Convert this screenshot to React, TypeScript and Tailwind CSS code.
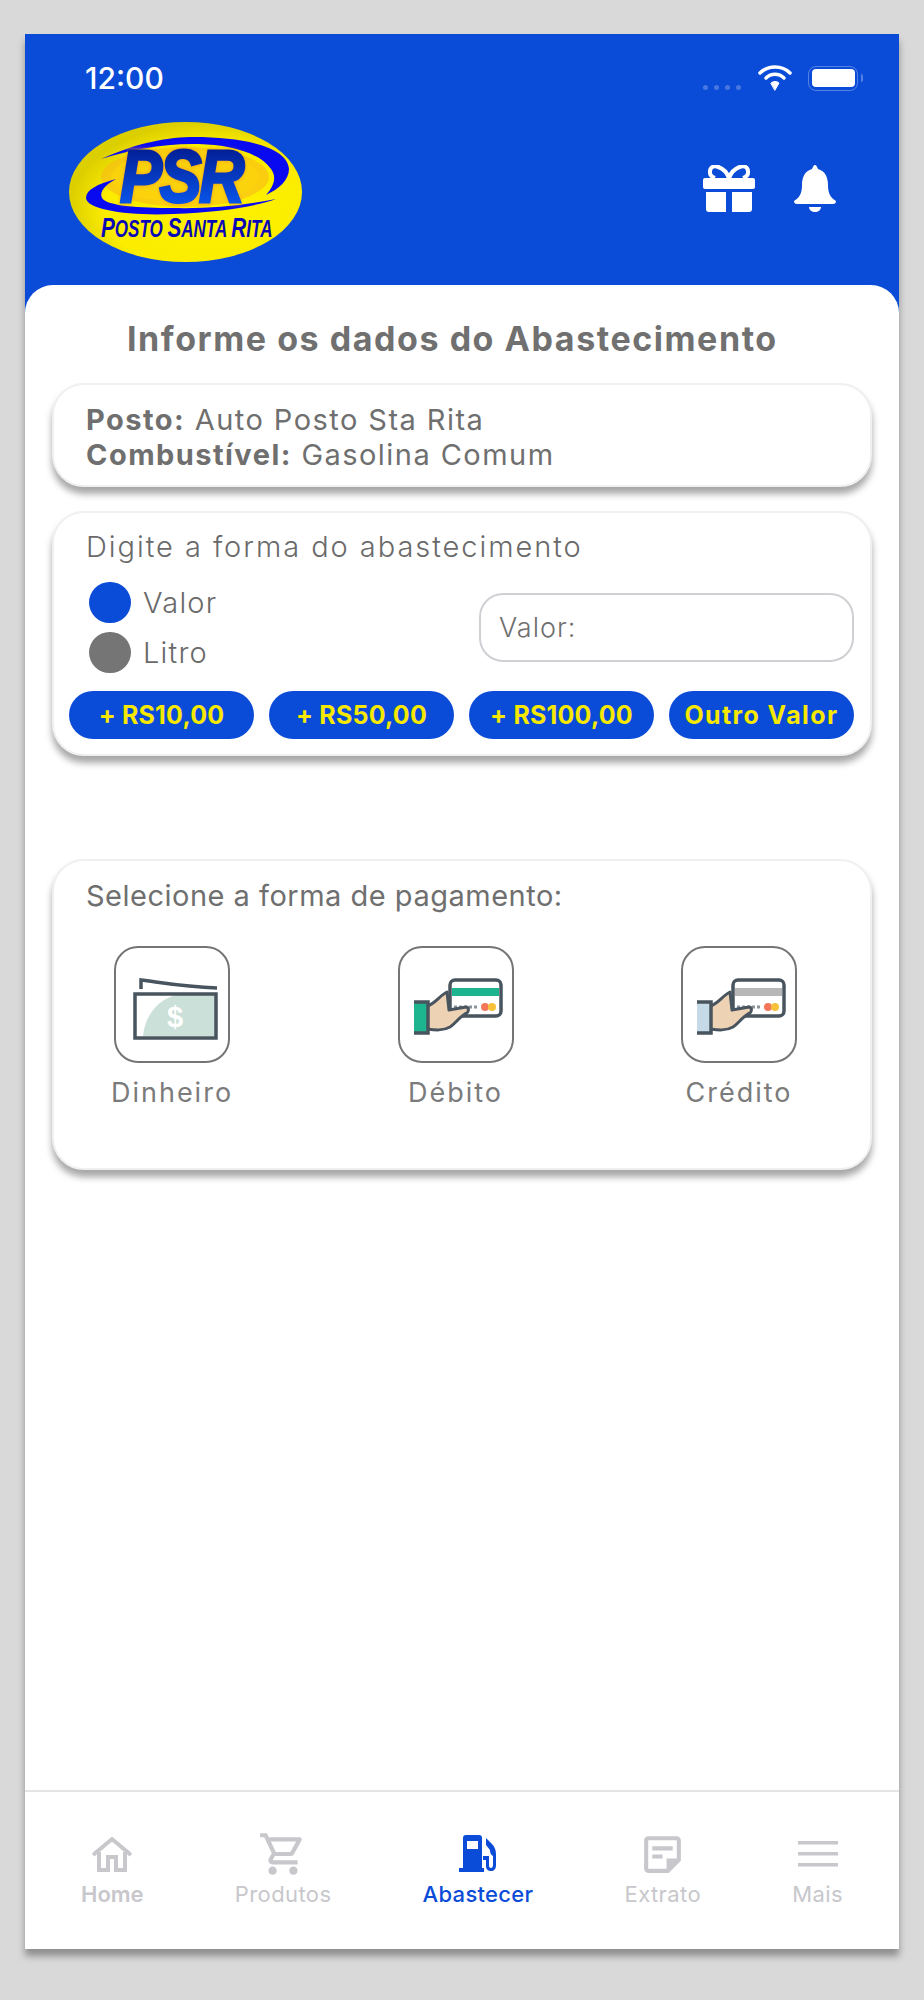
import { MdOutlineShoppingCart, MdOutlineStickyNote2 } from 'react-icons/md';

const QUICK_VALUES = [
    { label: '+ RS10,00', cls: 'tracking-[0.2px]' },
    { label: '+ RS50,00', cls: 'tracking-[0.2px]' },
    { label: '+ RS100,00', cls: 'tracking-[0.2px]' },
    { label: 'Outro Valor', cls: 'tracking-[1.4px]' },
];

function Logo() {
    return (
        <svg width="233" height="140" viewBox="0 0 233 140">
            <defs>
                <radialGradient id="logoBg" cx="62%" cy="62%" r="62%">
                    <stop offset="0%" stopColor="#fff200" />
                    <stop offset="75%" stopColor="#fbec00" />
                    <stop offset="100%" stopColor="#dccf00" />
                </radialGradient>
                <linearGradient id="psrFill" x1="0" y1="0" x2="0" y2="1">
                    <stop offset="0%" stopColor="#00107e" />
                    <stop offset="100%" stopColor="#0a62ff" />
                </linearGradient>
            </defs>
            <ellipse cx="116.5" cy="70" rx="116.5" ry="70" fill="url(#logoBg)" />
            <ellipse cx="116" cy="55" rx="84" ry="30" fill="#f8b51c" opacity="0.55" />
            <ellipse cx="116" cy="55" rx="74" ry="25" fill="#fbd40c" opacity="0.7" />
            <path d="M32 37C70 20 100 15 125 15C175 15 219 25 220 47C220 58 210 67 197 73C205 64 208 55 202 47C190 30 160 23 130 22C95 21 60 28 32 37Z" fill="#0a0af0" />
            <path d="M47 57C28 62 17 68 17 76C18 88 60 94 104 92C150 90 185 85 207 77C175 83 140 87 104 86C70 86 38 84 33 76C30 70 36 63 47 57Z" fill="#0a0af0" />
            <text transform="translate(51 80) scale(0.84 1)" className="drop-shadow-[0_0_2px_#f59a1e]" fontFamily="'Liberation Sans', sans-serif" fontWeight="700" fontStyle="italic" fontSize="75" fill="url(#psrFill)" stroke="url(#psrFill)" strokeWidth="3" letterSpacing="-3">PSR</text>
            <text transform="translate(32 115) scale(0.74 1)" fontFamily="'Liberation Sans', sans-serif" fontWeight="700" fontStyle="italic" fontSize="23" fill="#0808b8">
                <tspan fontSize="28">P</tspan>OSTO <tspan fontSize="28">S</tspan>ANTA <tspan fontSize="28">R</tspan>ITA
            </text>
        </svg>
    );
}

function CardHandIcon({ stripe, cuff }: { stripe: string; cuff: string }) {
    return (
        <svg className="shrink-0" width="116" height="117" viewBox="0 0 116 117" fill="none">
            <rect x="52" y="34" width="51" height="36" rx="5" fill="#fff" stroke="#48545e" strokeWidth="3.500" />
            <rect x="54" y="42" width="47" height="8" fill={stripe} />
            <path d="M56 61H80" stroke="#8b9298" strokeWidth="3" strokeDasharray="3 2" />
            <circle cx="87" cy="61" r="4" fill="#f4775a" />
            <circle cx="94" cy="61" r="4" fill="#f8c13a" />
            <path d="M29 60C37 58 41 50 49 46L51 64L68 61C71 61 71 65 69 67C62 70 58 77 52 81C45 85 37 84 29 83Z" fill="#eed2b4" stroke="#48545e" strokeWidth="3" strokeLinejoin="round" />
            <rect x="16" y="56" width="13" height="31" fill={cuff} />
            <path d="M16 56H30V87H16" stroke="#48545e" strokeWidth="3.500" />
        </svg>
    );
}

function CashIcon() {
    return (
        <svg className="shrink-0" width="116" height="117" viewBox="0 0 116 117" fill="none">
            <path d="M27 43V34C50 37 72 41 103 42" stroke="#48545e" strokeWidth="3.500" />
            <path d="M29 90C31 70 43 54 62 49H101V90Z" fill="#cbe0d8" />
            <rect x="21" y="48" width="81" height="44" stroke="#48545e" strokeWidth="3.500" />
            <text x="61" y="81" textAnchor="middle" fontFamily="'Liberation Sans', sans-serif" fontWeight="700" fontSize="29" fill="#fff">$</text>
        </svg>
    );
}

function PayOption({ label, children }: { label: string; children: React.ReactNode }) {
    return (
        <div className="flex w-[116px] flex-col items-center">
            <div className="flex h-[117px] w-[116px] items-center justify-center overflow-hidden rounded-[24px] border-2 border-[#757575] bg-white">
                {children}
            </div>
            <span className="mt-[14px] whitespace-nowrap text-[27px] leading-[32px] tracking-[2px] text-[#7b7b7b]">{label}</span>
        </div>
    );
}

function NavItem({ label, active, bold, icon }: { label: string; active?: boolean; bold?: boolean; icon: React.ReactNode }) {
    return (
        <div className={`flex flex-col items-center ${active ? 'text-[#0a4bd8]' : 'text-[#c7c7cc]'}`}>
            <div className="flex h-[44px] items-center justify-center">{icon}</div>
            <span className={`mt-[4px] whitespace-nowrap text-[22px] leading-[28px] ${bold ? 'font-semibold' : active ? 'font-medium tracking-[0.3px]' : 'tracking-[0.4px]'}`}>{label}</span>
        </div>
    );
}

export default function App() {
    return (
        <div className="h-[2000px] w-[924px] bg-[#d9d9d9] pl-[25px] pt-[34px] font-['Inter',sans-serif]">
            <div className="flex h-[1915px] w-[874px] flex-col bg-[#0a4bd8] shadow-[0_7px_7px_rgba(0,0,0,0.35)]">
                {/* status bar */}
                <div className="flex h-[88px] items-center justify-between pl-[60px] pr-[36px] text-white">
                    <span className="text-[30px] font-medium leading-none">12:00</span>
                    <div className="flex items-center">
                        <div className="mr-[17px] mt-[18px] flex gap-[6px]">
                            <span className="h-[5px] w-[5px] rounded-full bg-white/25" />
                            <span className="h-[5px] w-[5px] rounded-full bg-white/25" />
                            <span className="h-[5px] w-[5px] rounded-full bg-white/25" />
                            <span className="h-[5px] w-[5px] rounded-full bg-white/25" />
                        </div>
                        <svg width="34" height="26" viewBox="0 0 34 26" fill="none" stroke="#fff" strokeLinecap="round">
                            <path d="M2 8C10 0 24 0 32 8" strokeWidth="3.500" />
                            <path d="M8 13C13 8 21 8 26 13" strokeWidth="3.500" />
                            <path d="M13 18C15 16 19 16 21 18L17 25Z" fill="#fff" strokeWidth="1" />
                        </svg>
                        <div className="ml-[16px] flex h-[25px] w-[50px] items-center justify-center rounded-[8px] border border-white/30">
                            <div className="h-[18px] w-[43px] rounded-[4px] bg-white" />
                        </div>
                        <span className="ml-[3px] h-[8px] w-[2px] rounded-r bg-white/30" />
                    </div>
                </div>
                {/* logo + actions */}
                <div className="flex h-[163px] items-start justify-between pl-[44px] pr-[63px]">
                    <Logo />
                    <div className="mt-[43px] flex items-center gap-[39px]">
                        <svg width="52" height="47" viewBox="0 0 52 47" fill="#fff">
                            <path d="M26 13C22 2 8 -3 7 6C6.500 10 9 12 12 13M26 13C30 2 44 -3 45 6C45.500 10 43 12 40 13" fill="none" stroke="#fff" strokeWidth="4" />
                            <rect x="0" y="13" width="52" height="11" rx="2" />
                            <path d="M3 27H23V47H6C4 47 3 46 3 44Z" />
                            <path d="M29 27H49V44C49 46 48 47 46 47H29Z" />
                        </svg>
                        <svg width="42" height="47" viewBox="0 0 42 47" fill="#fff">
                            <path d="M21 0C22.500 0 23 2 24 4C31 6 34 12 34 20C34 29 37 33 42 36C42 38 41 39 39 39H3C1 39 0 38 0 36C5 33 8 29 8 20C8 12 11 6 18 4C19 2 19.500 0 21 0Z" />
                            <path d="M15 42H27C27 45 24 47 21 47C18 47 15 45 15 42Z" />
                        </svg>
                    </div>
                </div>

                <div className="flex min-h-0 flex-1 flex-col rounded-t-[28px] bg-white px-[27px]">
                    <h1 className="mt-[33px] h-[42px] whitespace-nowrap pl-[75px] text-[34px] font-bold leading-[42px] tracking-[1.55px] text-[#707070]">Informe os dados do Abastecimento</h1>

                    <div className="mt-[23px] h-[104px] rounded-[32px] border-2 border-[#f0f0f0] bg-white px-[32px] pt-[17px] text-[29px] leading-[35px] tracking-[1.45px] text-[#6f6f6f] shadow-[0_7px_7px_rgba(0,0,0,0.35)]">
                        <div><b className="font-bold">Posto:</b> Auto Posto Sta Rita</div>
                        <div><b className="font-bold">Combustível:</b> Gasolina Comum</div>
                    </div>

                    <div className="mt-[24px] h-[245px] rounded-[32px] border-2 border-[#f0f0f0] bg-white pl-[15px] pr-[16px] pt-[16px] shadow-[0_7px_7px_rgba(0,0,0,0.35)]">
                        <div className="pl-[17px] text-[29px] font-light leading-[36px] tracking-[1.95px] text-[#6a6a6a]">Digite a forma do abastecimento</div>
                        <div className="mt-[13px] flex h-[99px] items-center justify-between">
                            <div className="flex flex-col gap-[9px] pl-[20px]">
                                <label className="flex h-[41px] items-center gap-[12px] text-[29px] font-light tracking-[1.2px] text-[#6a6a6a]">
                                    <span className="h-[41px] w-[42px] rounded-full bg-[#0a4bd8]" />Valor
                                </label>
                                <label className="flex h-[41px] items-center gap-[12px] text-[29px] font-light tracking-[1.2px] text-[#6a6a6a]">
                                    <span className="h-[41px] w-[42px] rounded-full bg-[#757575]" />Litro
                                </label>
                            </div>
                            <input placeholder="Valor:" className="h-[69px] w-[375px] rounded-[24px] border-2 border-[#cfd0d4] bg-white px-[18px] text-[27px] font-light tracking-[1px] outline-none placeholder:text-[#6f6f6f]" />
                        </div>
                        <div className="mt-[14px] grid grid-cols-4 gap-[15px]">
                            {QUICK_VALUES.map(b => (
                                <button key={b.label} className={`h-[48px] whitespace-nowrap rounded-[24px] bg-[#0a4bd8] text-[25px] font-bold leading-none text-[#f6e800] ${b.cls}`}>{b.label}</button>
                            ))}
                        </div>
                    </div>

                    <div className="mt-[103px] h-[311px] rounded-[32px] border-2 border-[#f0f0f0] bg-white pt-[17px] shadow-[0_7px_7px_rgba(0,0,0,0.35)]">
                        <div className="pl-[32px] text-[29px] leading-[36px] tracking-[0.5px] text-[#6f6f6f]">Selecione a forma de pagamento:</div>
                        <div className="mt-[32px] flex justify-between pl-[60px] pr-[73px]">
                            <PayOption label="Dinheiro"><CashIcon /></PayOption>
                            <PayOption label="Débito"><CardHandIcon stripe="#1cb58f" cuff="#1cb58f" /></PayOption>
                            <PayOption label="Crédito"><CardHandIcon stripe="#b7b7b7" cuff="#c6d9e6" /></PayOption>
                        </div>
                    </div>
                </div>

                {/* bottom nav */}
                <div className="flex h-[159px] items-start justify-between border-t-2 border-[#e4e4e4] bg-white px-[56px] pt-[40px]">
                    <NavItem label="Home" bold icon={
                        <svg width="40" height="36" viewBox="0 0 40 36" fill="none" stroke="currentColor" strokeWidth="4">
                            <path d="M1 19L20 3L39 19" />
                            <path d="M7 16V34H16V21H24V34H33V16" />
                        </svg>
                    } />
                    <NavItem label="Produtos" icon={<MdOutlineShoppingCart size={50} />} />
                    <NavItem label="Abastecer" active icon={
                        <svg width="40" height="38" viewBox="0 0 40 38" fill="currentColor">
                            <path fillRule="evenodd" d="M5 3C5 1 6 0 8 0H21C23 0 24 1 24 3V33H26V37H1V33H5ZM9 6V14H20V6Z" />
                            <path d="M28 3L33 8C37 12 38 15 38 20V30C38 34 36 36 33 36C30 36 28 34 28 31V25H25V21H31V31C31 32 32 33 33 33C34 33 35 32 35 30V21C33 20 32 18 32 15L28 10Z" />
                        </svg>
                    } />
                    <NavItem label="Extrato" icon={<MdOutlineStickyNote2 size={49} />} />
                    <NavItem label="Mais" icon={
                        <svg width="40" height="26" viewBox="0 0 40 26" fill="currentColor">
                            <rect width="40" height="3.500" />
                            <rect y="11" width="40" height="3.500" />
                            <rect y="22" width="40" height="3.500" />
                        </svg>
                    } />
                </div>
            </div>
        </div>
    );
}
